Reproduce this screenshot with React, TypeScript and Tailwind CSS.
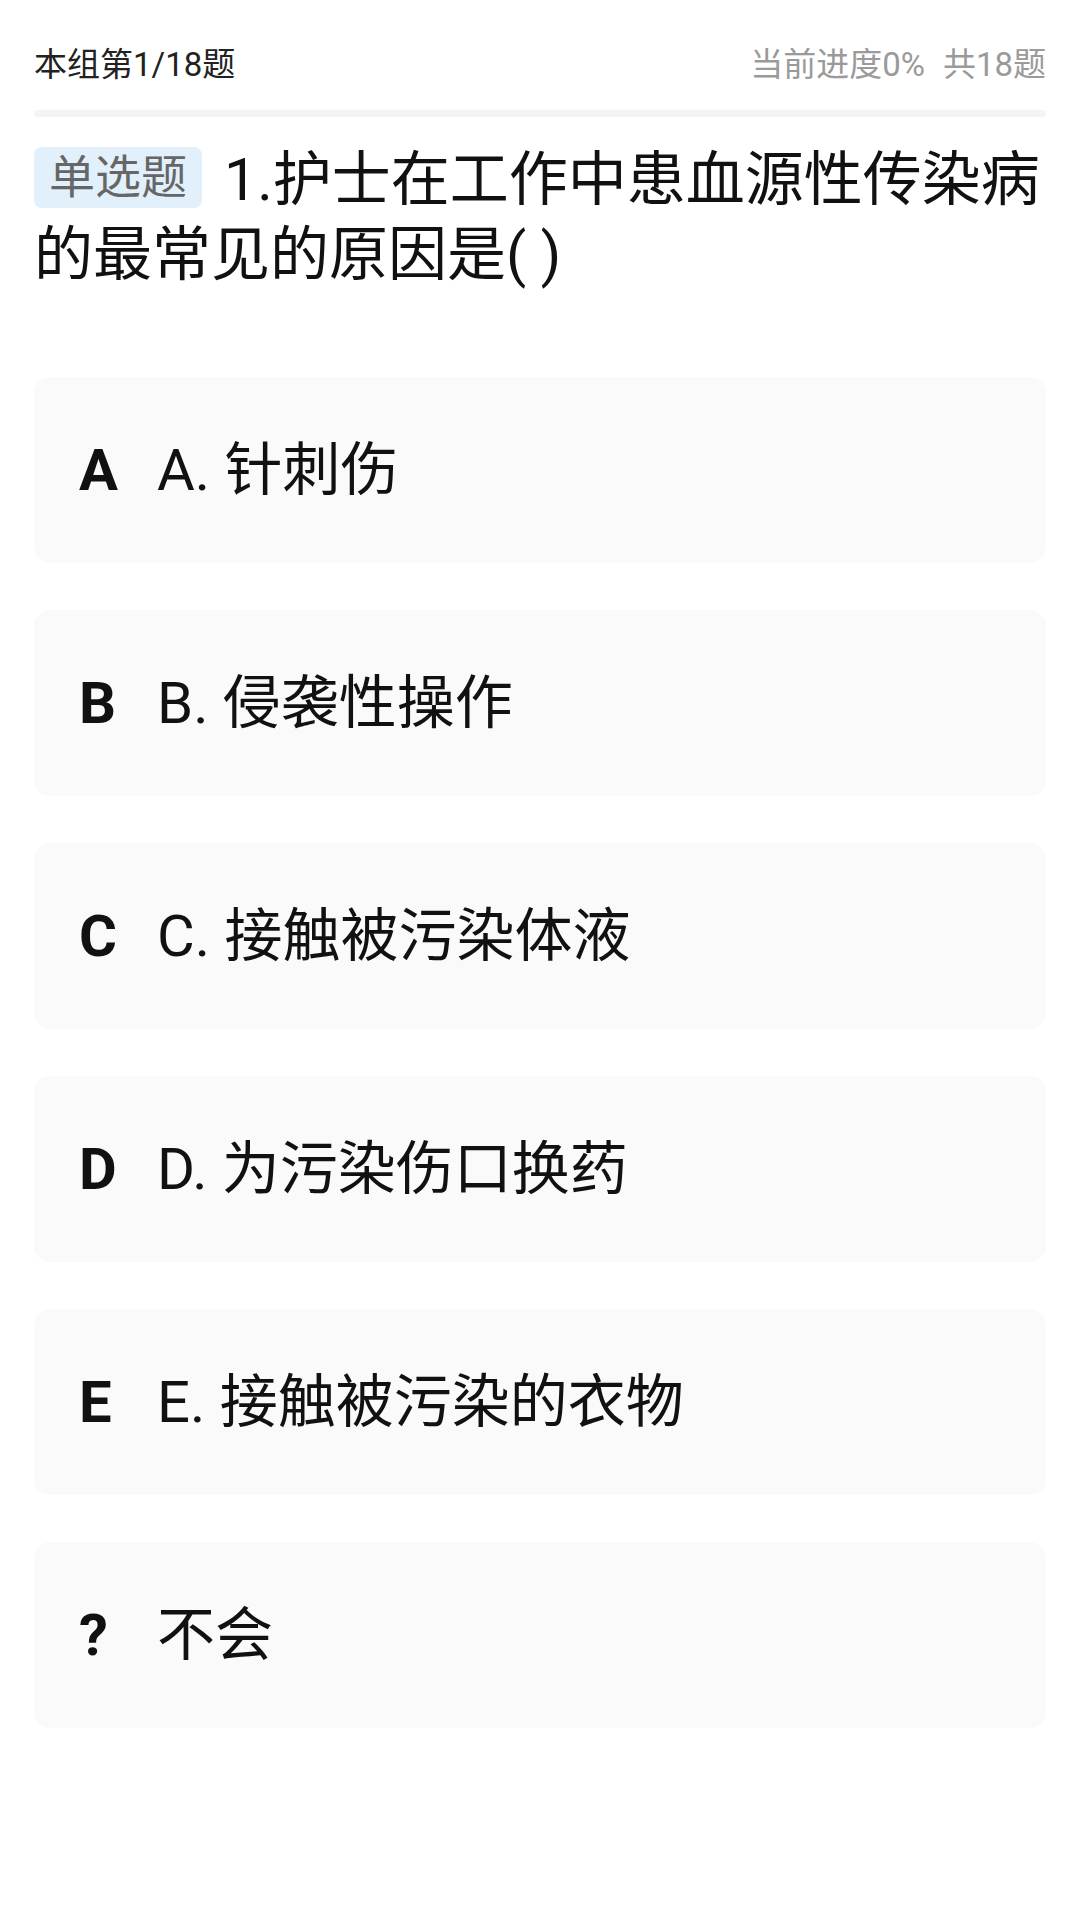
const options = [
  { key: "A", text: "A. 针刺伤" },
  { key: "B", text: "B. 侵袭性操作" },
  { key: "C", text: "C. 接触被污染体液" },
  { key: "D", text: "D. 为污染伤口换药" },
  { key: "E", text: "E. 接触被污染的衣物" },
  { key: "?", text: "不会" },
];

export default function App() {
  return (
    <div
      className="min-h-[1920px] bg-white px-[34px] text-[#111]"
      style={{ fontFamily: 'Roboto, "Noto Sans CJK SC", sans-serif' }}
    >
      <div className="flex h-[110px] items-center justify-between pt-[20px] text-[33px]">
        <span className="text-[#222]">本组第1/18题</span>
        <span className="text-[#9a9a9a]">
          当前进度0%<span className="ml-[18px]">共18题</span>
        </span>
      </div>
      <div className="h-[7px] rounded-full bg-[#f4f4f4]" />

      <div className="mt-[25px] text-[59px] leading-[75px]">
        <span className="mr-[22px] mt-[5px] inline-block h-[61px] rounded-[8px] bg-[#e1f0fb] px-[15px] align-top text-[46px] leading-[61px] text-[#666]">
          单选题
        </span>
        <span>1.护士在工作中患血源性传染病的最常见的原因是( )</span>
      </div>

      <div className="mt-[85px] flex flex-col gap-[47px]">
        {options.map((o) => (
          <div
            key={o.key}
            className="flex h-[186px] items-center rounded-2xl bg-[#fafafa] pl-[45px] text-[58px]"
          >
            <span className="w-[78px] font-bold">{o.key}</span>
            <span>{o.text}</span>
          </div>
        ))}
      </div>
    </div>
  );
}
